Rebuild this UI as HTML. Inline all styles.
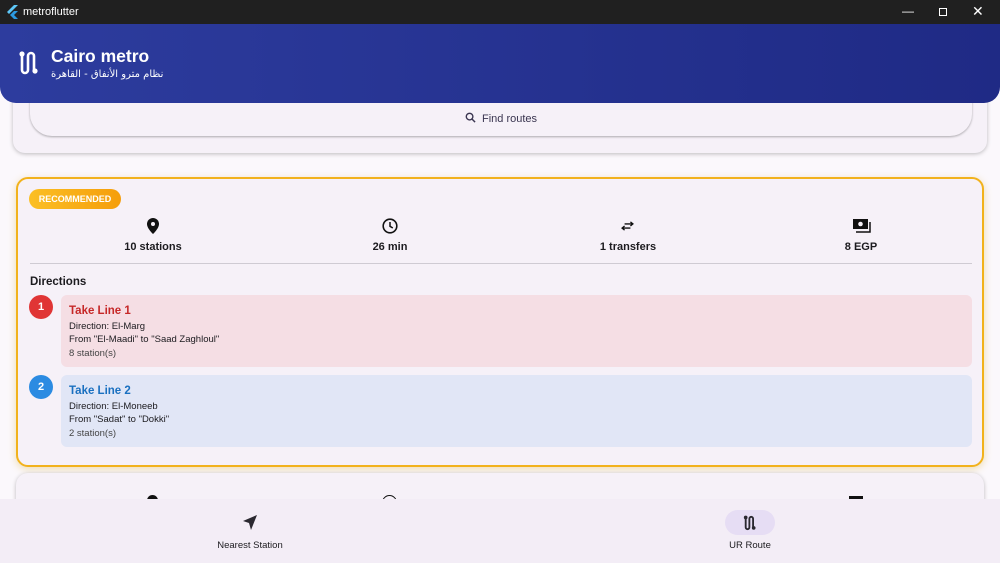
<!DOCTYPE html>
<html><head><meta charset="utf-8"><style>
*{box-sizing:border-box;margin:0;padding:0}
body{width:1000px;height:563px;overflow:hidden;background:#fbf8fc;font-family:"Liberation Sans","DejaVu Sans",sans-serif;position:relative;color:#1c1b1f}
.tb{position:absolute;top:0;left:0;width:1000px;height:24px;background:#202020;color:#fff;font-size:11px}
.hdr{position:absolute;top:24px;left:0;width:1000px;height:79px;background:linear-gradient(90deg,#2d3c9e,#1f2a85);border-radius:0 0 16px 16px;color:#fff;z-index:2}
.card{position:absolute;background:#f6f1f8;border-radius:12px;box-shadow:0 1px 4px rgba(0,0,0,.25)}
.stat{position:absolute;width:200px;text-align:center;font-size:11px;font-weight:bold;top:241px}
.ico{position:absolute}
.step{position:absolute;left:61px;width:911px;height:72px;border-radius:6px;padding:10px 8px;font-size:9.5px;line-height:13.5px}
.step b{font-size:11.5px;display:block;margin-bottom:1px}
.num{position:absolute;left:29px;width:24px;height:24px;border-radius:50%;color:#fff;font-size:11px;font-weight:bold;text-align:center;line-height:24px}
.nav{position:absolute;top:499px;left:0;width:1000px;height:64px;background:#f3edf6;font-size:9.5px;z-index:3}
</style></head><body>
<div class="tb">
<svg style="position:absolute;left:7px;top:5px" width="12" height="14" viewBox="0 0 12 14"><path d="M7 0L0 7l2 2 9-9z" fill="#5ec8f8"/><path d="M7 6L3 10l4 4h4L7 10l4-4z" fill="#2b9ae0"/></svg>
<span style="position:absolute;left:23px;top:6px">metroflutter</span>
<span style="position:absolute;left:902px;top:4px;font-size:12px">—</span>
<div style="position:absolute;left:939px;top:8px;width:8px;height:8px;border:1px solid #fff"></div>
<span style="position:absolute;left:972px;top:3px;font-size:14px">✕</span>
</div>
<div class="hdr">
<svg style="position:absolute;left:18px;top:26px" width="22" height="26" viewBox="0 0 22 26" fill="none" stroke="#fff" stroke-width="2.6" stroke-linecap="round"><circle cx="4" cy="4" r="2.6" fill="#fff" stroke="none"/><circle cx="17" cy="21" r="2.6" fill="#fff" stroke="none"/><path d="M4 4v16a3 3 0 0 0 6 0V6a3 3 0 0 1 6 0v15"/></svg>
<div style="position:absolute;left:51px;top:22px;font-size:17.5px;font-weight:bold">Cairo metro</div>
<div style="position:absolute;left:51px;top:45px;font-size:10px;font-family:'DejaVu Sans',sans-serif">نظام مترو الأنفاق - القاهرة</div>
</div>
<div class="card" style="left:13px;top:90px;width:974px;height:63px">
<div style="position:absolute;left:17px;top:0;width:942px;height:46px;border-radius:0 0 22px 22px;background:#f6f1f8;box-shadow:0 1px 2px rgba(0,0,0,.3)">
<div style="position:absolute;left:0;width:100%;top:22px;text-align:center;font-size:11px;color:#3a3550">
<svg width="11" height="11" viewBox="0 0 12 12" style="vertical-align:-1px;margin-right:6px"><circle cx="5" cy="5" r="3.6" fill="none" stroke="#3a3550" stroke-width="1.5"/><path d="M7.6 7.6L11 11" stroke="#3a3550" stroke-width="1.6"/></svg>Find routes</div></div>
</div>
<div class="card" style="left:16px;top:177px;width:968px;height:290px;border:2px solid #f2b21c;box-shadow:0 2px 8px rgba(220,180,60,.4)"></div>
<div style="position:absolute;left:29px;top:189px;width:92px;height:20px;border-radius:10px;background:linear-gradient(90deg,#fbbf24,#f59e0b);color:#fff;font-size:9px;font-weight:bold;text-align:center;line-height:20px">RECOMMENDED</div>
<svg class="ico" style="left:147px;top:218px" width="12" height="16" viewBox="0 0 12 16"><path d="M6 0a6 6 0 0 0-6 6c0 4.5 6 10 6 10s6-5.5 6-10a6 6 0 0 0-6-6z" fill="#111"/><circle cx="6" cy="6" r="2" fill="#f6f1f8"/></svg>
<svg class="ico" style="left:382px;top:218px" width="16" height="16" viewBox="0 0 16 16"><circle cx="8" cy="8" r="6.8" fill="none" stroke="#111" stroke-width="1.6"/><path d="M8 4v4.3l2.8 1.7" fill="none" stroke="#111" stroke-width="1.5"/></svg>
<svg class="ico" style="left:621px;top:221px" width="13" height="10" viewBox="0 0 15 12" fill="none" stroke="#111" stroke-width="1.6"><path d="M4 3.5h10M11 1l3 2.5-3 2.5M11 8.5H1M4 6L1 8.5 4 11"/></svg>
<svg class="ico" style="left:853px;top:219px" width="18" height="14" viewBox="0 0 18 14"><rect x="0" y="0" width="15" height="10" fill="#111"/><circle cx="7.5" cy="5" r="2.3" fill="#f6f1f8"/><path d="M17 3v10H3" fill="none" stroke="#111" stroke-width="1.5"/></svg>
<div class="stat" style="left:53px">10 stations</div>
<div class="stat" style="left:290px">26 min</div>
<div class="stat" style="left:528px">1 transfers</div>
<div class="stat" style="left:761px">8 EGP</div>
<div style="position:absolute;left:30px;top:263px;width:942px;height:1px;background:#cfcbd3"></div>
<div style="position:absolute;left:30px;top:276px;font-size:11.5px;font-weight:bold">Directions</div>
<div class="num" style="top:295px;background:#e03535">1</div>
<div class="step" style="top:295px;background:#f5dee4"><b style="color:#c62828">Take Line 1</b>Direction: El-Marg<br>From "El-Maadi" to "Saad Zaghloul"<br><span style="color:#444">8 station(s)</span></div>
<div class="num" style="top:375px;background:#2b8be2">2</div>
<div class="step" style="top:375px;background:#e1e6f6"><b style="color:#1a70c0">Take Line 2</b>Direction: El-Moneeb<br>From "Sadat" to "Dokki"<br><span style="color:#444">2 station(s)</span></div>
<div class="card" style="left:16px;top:473px;width:968px;height:60px"></div>
<div style="position:absolute;left:147px;top:495px;width:11px;height:8px;border-radius:6px 6px 0 0;background:#111"></div>
<div style="position:absolute;left:382px;top:495px;width:15px;height:10px;border-radius:8px 8px 0 0;border:1.6px solid #111"></div>
<div style="position:absolute;left:849px;top:496px;width:14px;height:6px;background:#111"></div>
<div class="nav">
<svg style="position:absolute;left:243px;top:16px" width="14" height="15" viewBox="0 0 14 15"><path d="M14 0L0 6l6 2 2 7z" fill="#2a2830"/></svg>
<div style="position:absolute;left:190px;width:120px;top:41px;text-align:center">Nearest Station</div>
<div style="position:absolute;left:725px;top:11px;width:50px;height:25px;border-radius:13px;background:#e6ddf4"></div>
<svg style="position:absolute;left:743px;top:16px" width="14" height="16" viewBox="0 0 22 26" fill="none" stroke="#2a2830" stroke-width="3" stroke-linecap="round"><circle cx="4" cy="4" r="3" fill="#2a2830" stroke="none"/><circle cx="17" cy="21" r="3" fill="#2a2830" stroke="none"/><path d="M4 4v16a3 3 0 0 0 6 0V6a3 3 0 0 1 6 0v15"/></svg>
<div style="position:absolute;left:700px;width:100px;top:41px;text-align:center">UR Route</div>
</div>
</body></html>
